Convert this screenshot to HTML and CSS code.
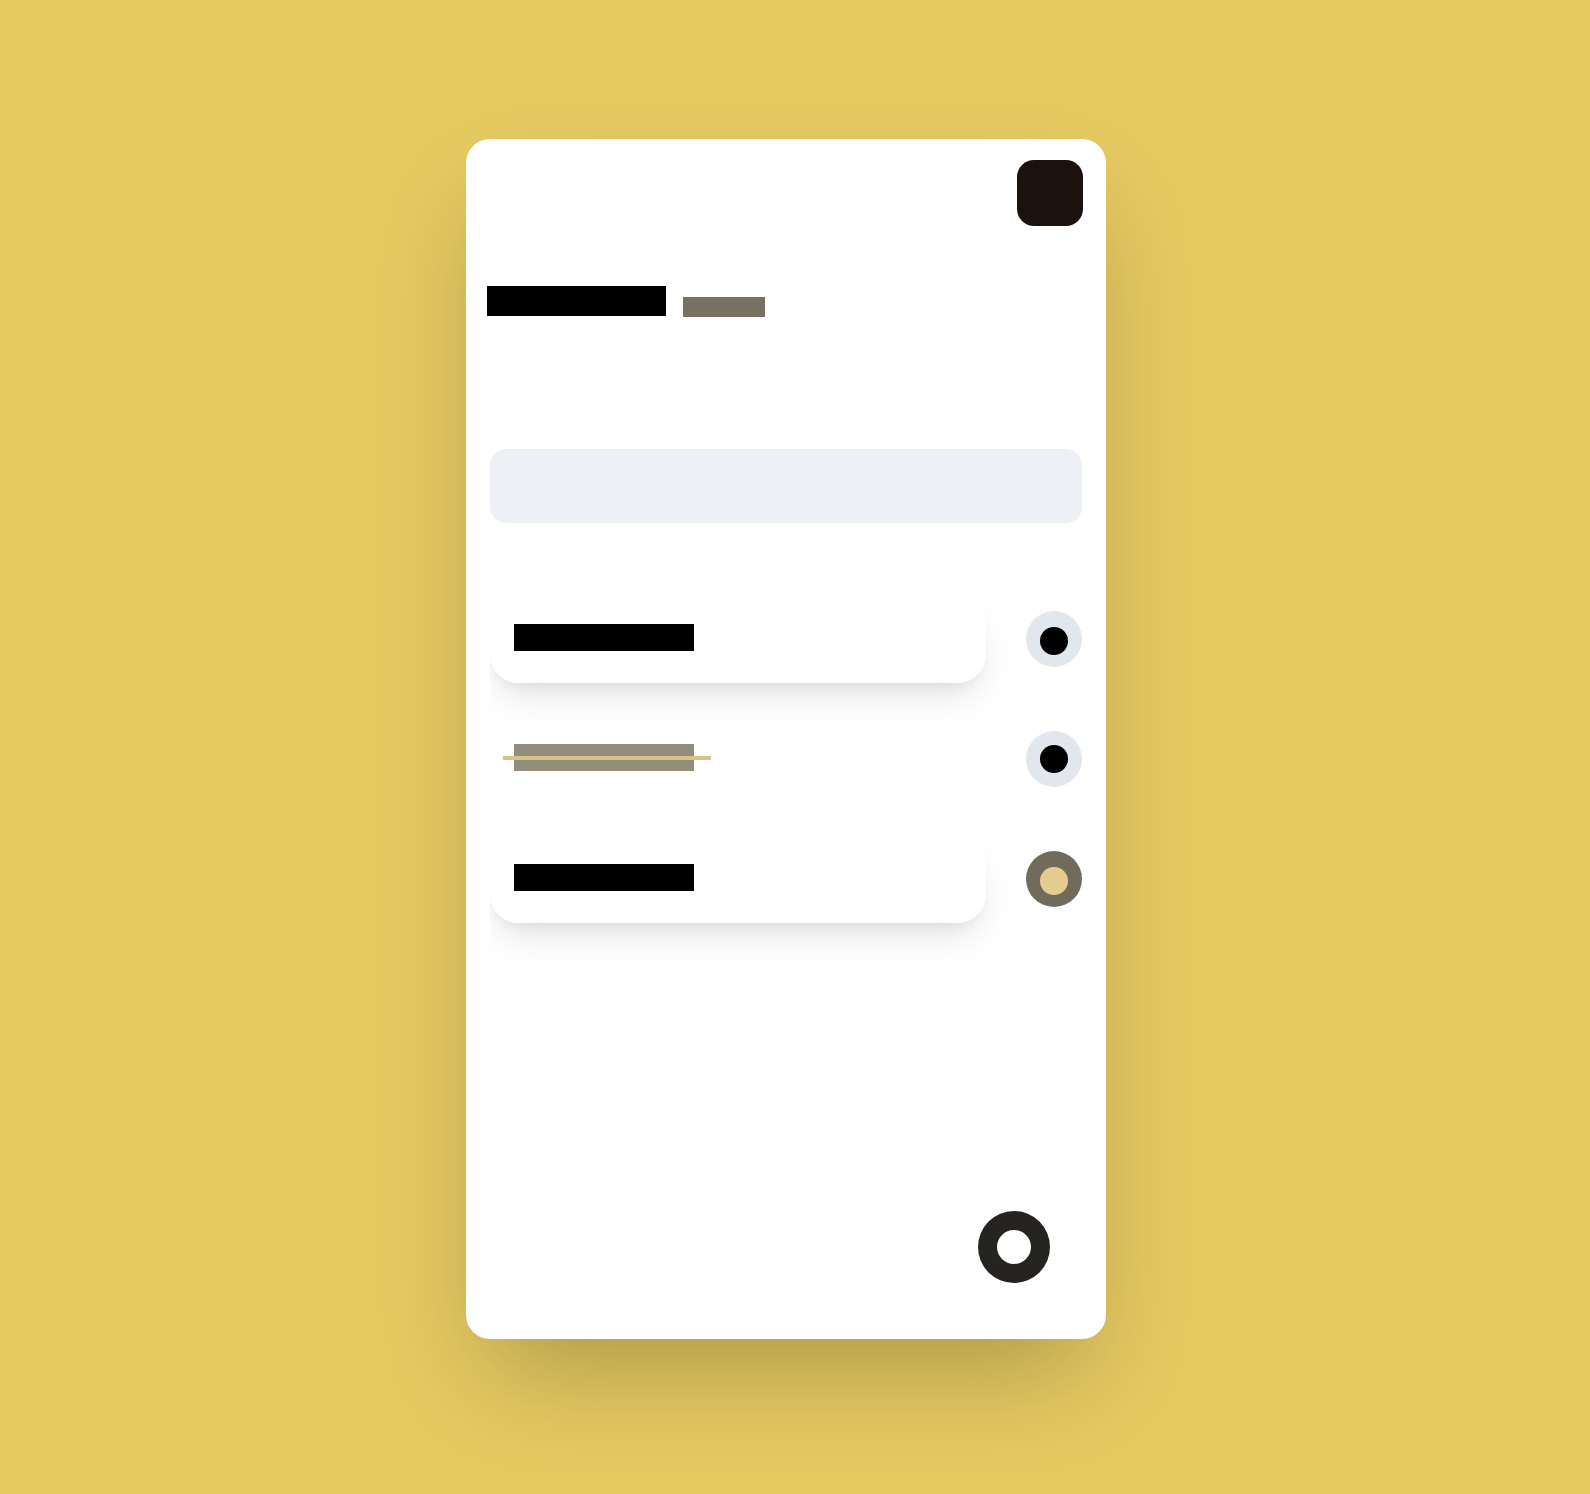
FILE: index.html
```html
<!DOCTYPE html>
<html lang="en">
<head>
  <meta charset="utf-8">
  <meta name="viewport" content="width=device-width, initial-scale=1">
  <title>Tasks</title>
  <link rel="stylesheet" href="styles.css">
</head>
<body>
  <main class="card">
    <header class="card-header">
      <button class="menu-button" type="button" aria-label="Menu"></button>
    </header>
    <div class="heading">
      <span class="bar bar-title"></span>
      <span class="bar bar-subtitle"></span>
    </div>
    <form class="entry">
      <input class="entry-input" type="text" aria-label="New task">
    </form>
    <ul class="tasks">
      <li class="task">
        <div class="task-body raised"><span class="bar bar-task"></span></div>
        <button class="task-button" type="button" aria-label="Task action"><span class="dot dot-low"></span></button>
      </li>
      <li class="task">
        <div class="task-body"><span class="bar bar-task done"></span></div>
        <button class="task-button" type="button" aria-label="Task action"><span class="dot"></span></button>
      </li>
      <li class="task">
        <div class="task-body raised"><span class="bar bar-task"></span></div>
        <button class="task-button active" type="button" aria-label="Task action"><span class="dot dot-low"></span></button>
      </li>
    </ul>
    <button class="add-button" type="button" aria-label="Add task"><span class="add-dot"></span></button>
  </main>
</body>
</html>
```

FILE: styles.css
```css
* {
  box-sizing: border-box;
}

body {
  margin: 0;
  min-height: 100vh;
  padding: 139px 18px 155px 0;
  background: #e5c961;
  font-family: "Liberation Sans", sans-serif;
  display: flex;
  justify-content: center;
}

button {
  border: 0;
  padding: 0;
  cursor: pointer;
}

.card {
  width: 100%;
  max-width: 640px;
  padding-bottom: 56px;
  background: #fff;
  border-radius: 24px;
  box-shadow: 0 50px 100px -24px rgba(0, 0, 0, 0.25);
  display: flex;
  flex-direction: column;
}

.card-header {
  display: flex;
  justify-content: flex-end;
  padding: 21px 23px 0;
}

.menu-button {
  width: 66px;
  height: 66px;
  border-radius: 17px;
  background: #1c110c;
}

.heading {
  display: flex;
  align-items: flex-start;
  gap: 17px;
  padding: 60px 21px 0;
}

.bar {
  display: block;
  background: #000;
}

.bar-title {
  width: 179px;
  height: 30px;
}

.bar-subtitle {
  width: 82px;
  height: 20px;
  margin-top: 11px;
  background: #787062;
}

.entry {
  padding: 132px 24px 0;
}

.entry-input {
  display: block;
  width: 100%;
  height: 74px;
  padding: 0 24px;
  border: 0;
  border-radius: 16px;
  background: #edf1f6;
  font: inherit;
}

.tasks {
  list-style: none;
  margin: 40px 24px 0;
  padding: 32px 0 56px;
  overflow: hidden;
  display: flex;
  flex-direction: column;
  gap: 32px;
}

.task {
  display: flex;
  align-items: center;
  gap: 40px;
}

.task-body {
  flex: 1;
  height: 88px;
  padding: 29px 24px;
  border-radius: 28px;
}

.raised {
  box-shadow: 0 20px 36px -8px rgba(0, 0, 0, 0.11),
    0 8px 12px -4px rgba(0, 0, 0, 0.05);
}

.bar-task {
  position: relative;
  width: 180px;
  height: 27px;
}

.done {
  background: #938d7c;
}

.done::after {
  content: "";
  position: absolute;
  top: 12px;
  left: -11px;
  right: -17px;
  height: 4px;
  background: #d4c487;
}

.task-button {
  flex: none;
  width: 56px;
  height: 56px;
  border-radius: 50%;
  background: #e2e7ee;
  display: flex;
  align-items: center;
  justify-content: center;
}

.dot {
  width: 28px;
  height: 28px;
  border-radius: 50%;
  background: #000;
}

.dot-low {
  margin-top: 4px;
}

.active {
  background: #706b5a;
}

.active .dot {
  background: #e4cc90;
}

.add-button {
  width: 72px;
  height: 72px;
  margin: auto 56px 0 0;
  align-self: flex-end;
  border-radius: 50%;
  background: #252420;
  display: flex;
  align-items: center;
  justify-content: center;
}

.add-dot {
  width: 34px;
  height: 34px;
  border-radius: 50%;
  background: #fff;
}
```
